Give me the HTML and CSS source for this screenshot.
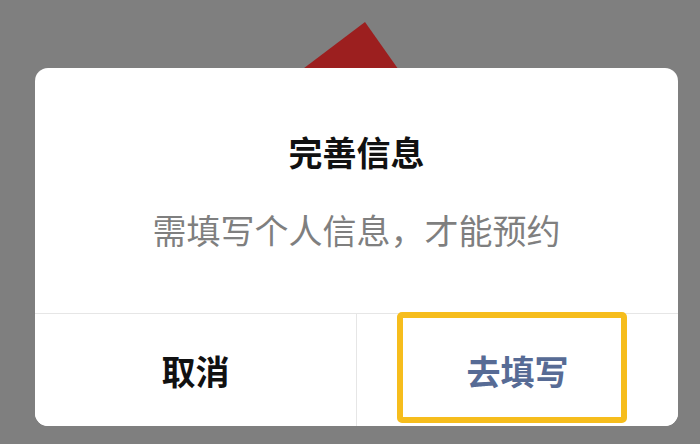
FILE: index.html
```html
<!DOCTYPE html>
<html lang="zh-CN">
<head>
<meta charset="utf-8">
<title>完善信息</title>
<link rel="stylesheet" href="styles.css">
</head>
<body>
<div class="screen">
  <svg class="backdrop-shape" width="700" height="120" viewBox="0 0 700 120" aria-hidden="true">
    <polygon points="365,22 420,100 330,140 275,90" fill="#9c1f1f"/>
  </svg>
  <div class="dialog">
    <div class="dialog-body">
      <h1 class="dialog-title">完善信息</h1>
      <p class="dialog-text">需填写个人信息，才能预约</p>
    </div>
    <div class="dialog-actions">
      <button class="btn btn-cancel" type="button">取消</button>
      <button class="btn btn-primary" type="button">去填写</button>
    </div>
    <div class="highlight"></div>
  </div>
</div>
</body>
</html>
```

FILE: styles.css
```css
html, body {
  margin: 0;
  padding: 0;
}
body {
  width: 700px;
  height: 444px;
  overflow: hidden;
  background: #7f7f7f;
  font-family: "Noto Sans CJK SC", "Noto Sans", sans-serif;
}
.screen {
  position: relative;
  width: 700px;
  height: 444px;
  padding: 68px 22px 0 35px;
  box-sizing: border-box;
}
.backdrop-shape {
  position: absolute;
  left: 0;
  top: 0;
}
.dialog {
  position: relative;
  width: 643px;
  height: 358px;
  background: #fff;
  border-radius: 13px;
  display: flex;
  flex-direction: column;
  overflow: hidden;
}
.dialog-body {
  flex: 1;
  display: flex;
  flex-direction: column;
  align-items: center;
  padding-top: 60px;
}
.dialog-title {
  margin: 0;
  font-size: 34px;
  line-height: 48px;
  font-weight: 700;
  color: #111;
}
.dialog-text {
  margin: 30px 0 0;
  font-size: 34px;
  line-height: 48px;
  font-weight: 400;
  color: #7f7f7f;
}
.dialog-actions {
  height: 112px;
  display: flex;
  border-top: 1px solid #e6e6e6;
}
.btn {
  flex: 1;
  border: 0;
  background: #fff;
  font-family: inherit;
  font-size: 34px;
  font-weight: 700;
  padding: 0;
  margin: 0;
}
.btn-cancel {
  color: #111;
  border-right: 1px solid #e6e6e6;
}
.btn-primary {
  color: #576b95;
}
.highlight {
  position: absolute;
  left: 362px;
  top: 244px;
  width: 230px;
  height: 111px;
  box-sizing: border-box;
  border: 6px solid #f6bd1d;
  border-radius: 5px;
}
```
